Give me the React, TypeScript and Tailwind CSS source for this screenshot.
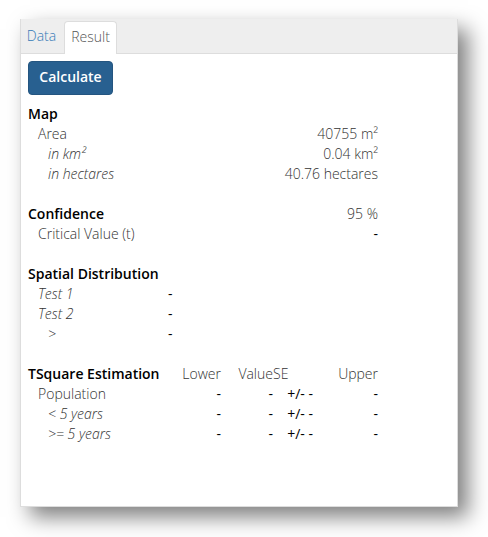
import type { ReactNode } from 'react';

type Row = { label: string; level: 1 | 2; italic?: boolean; cells: string[] };

function Label({ row }: { row: Row }) {
  const indent = row.level === 2 ? 'pl-5' : 'pl-[10px]';
  return (
    <th scope="row" className={`${indent} text-left font-light ${row.italic ? 'italic' : ''}`}>
      {row.label}
    </th>
  );
}

function Section({ title, head, widths, rows, align = 'text-right' }: {
  title: string;
  head?: ReactNode;
  widths: string[];
  rows: Row[];
  align?: string;
}) {
  return (
    <table className="mb-5 w-full max-w-[350px] table-fixed whitespace-nowrap">
      <colgroup>
        {widths.map((w, i) => <col key={i} className={w} />)}
      </colgroup>
      <thead>
        <tr>
          <th scope="col" className="text-left font-[570] text-black">{title}</th>
          {head}
        </tr>
      </thead>
      <tbody>
        {rows.map((row) => (
          <tr key={row.label}>
            <Label row={row} />
            {row.cells.map((c, i) => (
              <td key={i} className={`${align} ${c.endsWith('-') ? 'font-normal text-black' : ''}`}>{c}</td>
            ))}
          </tr>
        ))}
      </tbody>
    </table>
  );
}

export default function App() {
  return (
    <main className="bg-white pt-[19px] pr-[30px] pb-[30px] pl-5 font-['Open_Sans','Noto_Sans',sans-serif] text-sm leading-5 font-light text-[#333]">
      <div className="min-h-[488px] border border-t-0 border-[#ddd] bg-white shadow-[10px_10px_20px_rgba(0,0,0,0.5)]">
        <div role="tablist" className="flex h-[35px] items-end border-b border-[#ddd] bg-[#eee]">
          <button role="tab" aria-selected="false" className="h-[33px] w-[43px] pr-0.5 pb-0.5 text-center text-[#337ab7]">Data</button>
          <button role="tab" aria-selected="true" className="-mb-px h-[33px] w-[53px] rounded-t border border-b-0 border-[#ddd] bg-white pb-0.5 text-center text-[#555]">Result</button>
        </div>
        <div role="tabpanel" className="px-[7px] pt-[7px]">
          <button className="mb-[9px] h-[34px] w-[85px] rounded border border-[#245580] bg-[#286090] pb-0.5 text-center font-[570] text-white">Calculate</button>
          <Section
            title="Map"
            widths={['w-[140px]', 'w-[210px]']}
            rows={[
              { label: 'Area', level: 1, cells: ['40755 m²'] },
              { label: 'in km²', level: 2, italic: true, cells: ['0.04 km²'] },
              { label: 'in hectares', level: 2, italic: true, cells: ['40.76 hectares'] },
            ]}
          />
          <Section
            title="Confidence"
            head={<td className="text-right">95 %</td>}
            widths={['w-[140px]', 'w-[210px]']}
            rows={[{ label: 'Critical Value (t)', level: 1, cells: ['-'] }]}
          />
          <Section
            title="Spatial Distribution"
            widths={['w-[140px]', 'w-[210px]']}
            align="text-left"
            rows={[
              { label: 'Test 1', level: 1, italic: true, cells: ['-'] },
              { label: 'Test 2', level: 1, italic: true, cells: ['-'] },
              { label: '>', level: 2, italic: true, cells: ['-'] },
            ]}
          />
          <Section
            title="TSquare Estimation"
            head={
              <>
                <th scope="col" className="text-right font-light">Lower</th>
                <th scope="col" className="text-right font-light">Value</th>
                <th scope="col" className="text-left font-light">SE</th>
                <th scope="col" className="text-right font-light">Upper</th>
              </>
            }
            widths={['w-[140px]', 'w-[53px]', 'w-[52px]', 'w-[40px]', 'w-[65px]']}
            rows={[
              { label: 'Population', level: 1, cells: ['-', '-', '+/- -', '-'] },
              { label: '< 5 years', level: 2, italic: true, cells: ['-', '-', '+/- -', '-'] },
              { label: '>= 5 years', level: 2, italic: true, cells: ['-', '-', '+/- -', '-'] },
            ]}
          />
        </div>
      </div>
    </main>
  );
}
